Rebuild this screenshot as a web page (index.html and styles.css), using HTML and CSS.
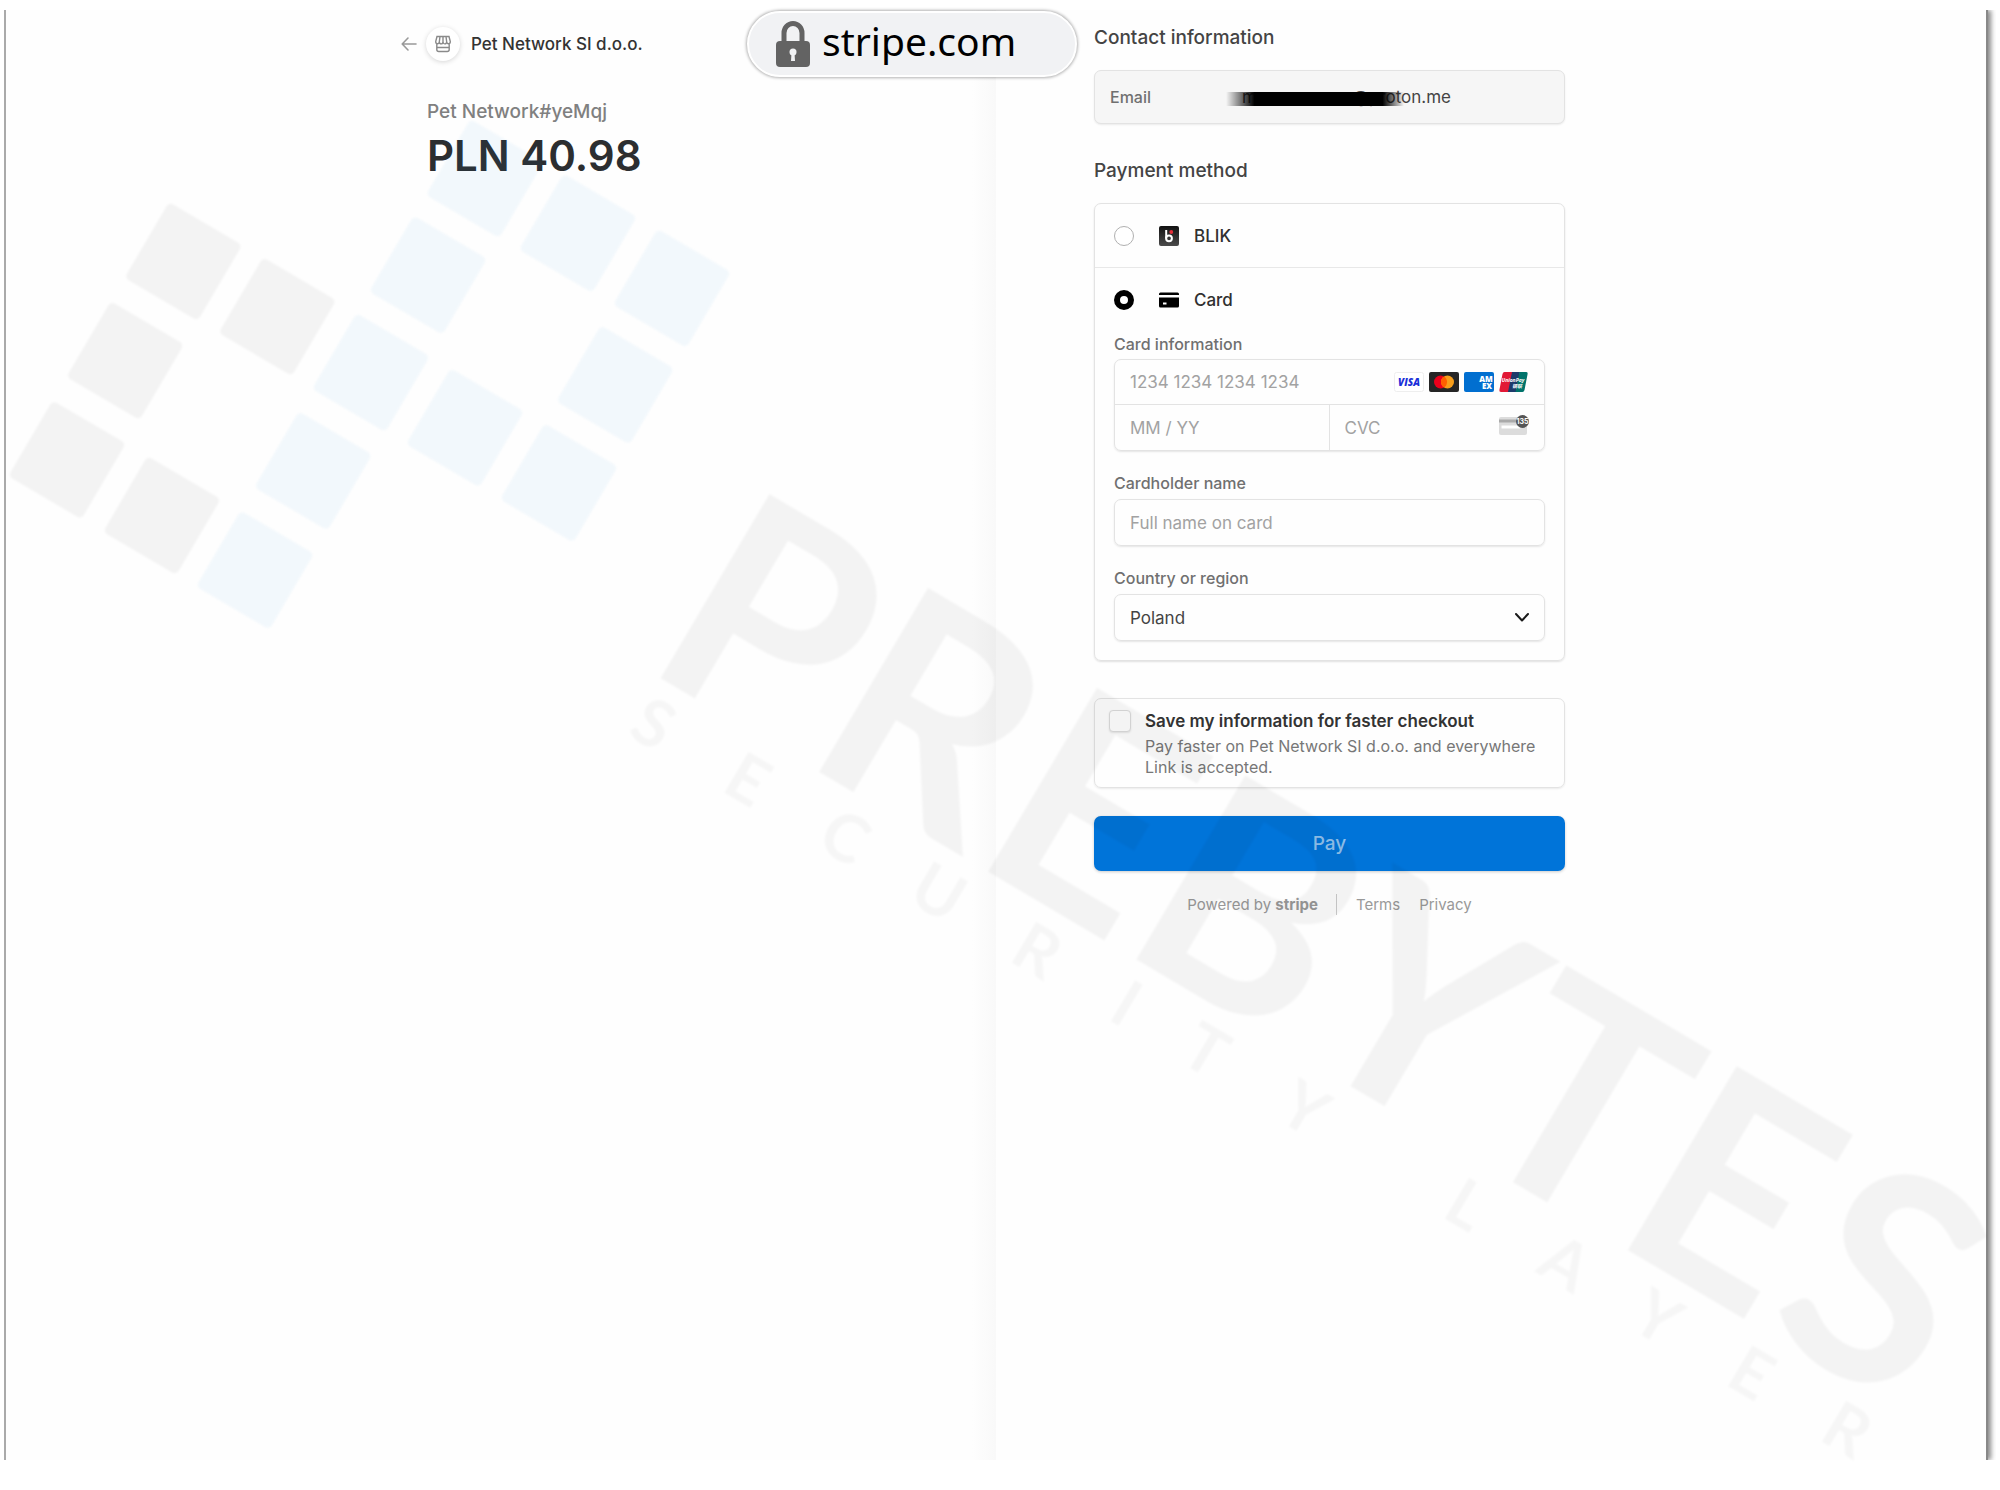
FILE: index.html
```
<!DOCTYPE html>
<html lang="en">
<head>
    <meta charset="UTF-8">
    <title>Pet Network SI d.o.o.</title>
    <link rel="stylesheet" href="styles.css">
</head>
<body>

<div class="window">
    <div class="checkout">
        <header class="summary">
            <div class="business">
                <a href="#" class="back" aria-label="Back">
                    <svg width="16" height="16" viewBox="0 0 16 16" fill="none" stroke="#999" stroke-width="1.6" stroke-linecap="round" stroke-linejoin="round"><path d="M15 8H1.5M7 2L1.2 8L7 14"/></svg>
                </a>
                <span class="store-icon">
                    <svg width="18" height="18" viewBox="0 0 18 18" fill="none" stroke="#8a8a8a" stroke-width="1.4"><path d="M3 1.500h12l1.300 5c0 3-3.600 3-3.600.3c0 2.800-3.700 2.800-3.700 0c0 2.800-3.700 2.800-3.700 0c0 2.700-3.600 2.700-3.600-.3zM6 1.500L5.300 7M12 1.500L12.700 7M9 1.500V7M2.800 9v5.500q0 2 2 2h8.400q2 0 2-2V9M3 12.500h12"/></svg>
                </span>
                <span class="business-name">Pet Network SI d.o.o.</span>
            </div>
            <p class="product">Pet Network#yeMqj</p>
            <h1 class="amount">PLN 40.98</h1>
        </header>

        <form class="payment">
            <h2>Contact information</h2>
            <div class="email-box">
                <label for="email">Email</label>
                <div class="email-value">
                    <input id="email" type="text" value="m••••••••••@proton.me" readonly>
                    <span class="redaction"></span>
                </div>
            </div>

            <h2>Payment method</h2>
            <div class="methods">
                <div class="method method-blik">
                    <input type="radio" name="method" id="blik">
                    <svg class="method-icon" width="20" height="20" viewBox="0 0 20 20"><defs><linearGradient id="bg" x1="0" y1="0" x2="0" y2="1"><stop offset="0" stop-color="#111"/><stop offset="1" stop-color="#4b4b4b"/></linearGradient></defs><rect width="20" height="20" rx="2" fill="url(#bg)"/><path d="M7.2 4v8.3" stroke="#fff" stroke-width="2" fill="none"/><circle cx="10" cy="12.3" r="2.9" fill="none" stroke="#fff" stroke-width="2"/><circle cx="12.3" cy="6" r="1.9" fill="#e52f3a"/></svg>
                    <label for="blik">BLIK</label>
                </div>
                <div class="method">
                    <input type="radio" name="method" id="card" checked>
                    <svg class="method-icon" width="20" height="20" viewBox="0 0 20 20"><path d="M0 4q0-1.5 1.5-1.5h17Q20 2.500 20 4v1H0zM0 7.500h20v8.500q0 1.500-1.500 1.500h-17Q0 17.500 0 16zM4 12.500v2h3.500v-2z" fill="#000" fill-rule="evenodd"/></svg>
                    <label for="card">Card</label>
                </div>

                <div class="card-form">
                    <label for="number">Card information</label>
                    <div class="card-fields">
                        <div class="field number">
                            <input type="text" id="number" placeholder="1234 1234 1234 1234">
                            <span class="brands">
                                <svg width="30" height="20" viewBox="0 0 30 20"><rect x=".5" y=".5" width="29" height="19" rx="2" fill="#fff" stroke="#eee"/><text x="15" y="14" text-anchor="middle" class="visa">VISA</text></svg>
                                <svg width="30" height="20" viewBox="0 0 30 20"><rect width="30" height="20" rx="2" fill="#252525"/><circle cx="11.500" cy="10" r="6.500" fill="#eb001b"/><circle cx="18.500" cy="10" r="6.500" fill="#f79e1b"/><path d="M15 4.500a6.500 6.500 0 0 1 0 11a6.500 6.500 0 0 1 0-11z" fill="#ff5f00"/></svg>
                                <svg width="30" height="20" viewBox="0 0 30 20"><rect width="30" height="20" rx="2" fill="#016fd0"/><text x="22" y="10" text-anchor="middle" class="amex">AM</text><text x="23" y="17" text-anchor="middle" class="amex">EX</text></svg>
                                <svg width="30" height="20" viewBox="0 0 30 20"><path d="M5.500 0H14L10 20H2Q0 20 .4 18L3.500 2Q4 0 5.500 0z" fill="#e21836"/><path d="M13 0h8l-4 20H9z" fill="#1d3a6b"/><path d="M20.500 0H27q2 0 1.600 2L25.500 18q-.5 2-2 2h-7z" fill="#00736b"/><text x="14" y="10" text-anchor="middle" class="union">UnionPay</text><text x="18" y="16" text-anchor="middle" class="union">银联</text></svg>
                            </span>
                        </div>
                        <div class="field expiry">
                            <input type="text" aria-label="Expiration" placeholder="MM / YY">
                        </div>
                        <div class="field cvc">
                            <input type="text" aria-label="CVC" placeholder="CVC">
                            <svg class="cvc-icon" width="30" height="20" viewBox="0 0 30 20"><rect y="2" width="28" height="18" rx="2" fill="#dcdcdc"/><path d="M0 4.500h20v3H0z" fill="#aaa"/><path d="M2.500 10.500h19v3h-19z" fill="#fff"/><circle cx="23.500" cy="6.500" r="6.500" fill="#555"/><text x="23.500" y="9" text-anchor="middle" class="cvc-digits">135</text></svg>
                        </div>
                    </div>

                    <label for="holder">Cardholder name</label>
                    <div class="field boxed"><input type="text" id="holder" placeholder="Full name on card"></div>

                    <label for="country">Country or region</label>
                    <div class="field boxed country">
                        <select id="country"><option>Poland</option></select>
                        <svg width="14" height="9" viewBox="0 0 14 9" fill="none" stroke="#1a1a1a" stroke-width="2" stroke-linecap="round" stroke-linejoin="round"><path d="M1 1L7 7.500L13 1"/></svg>
                    </div>
                </div>
            </div>

            <div class="save">
                <input type="checkbox" id="save">
                <div>
                    <label for="save">Save my information for faster checkout</label>
                    <p>Pay faster on Pet Network SI d.o.o. and everywhere Link is accepted.</p>
                </div>
            </div>

            <button type="submit" class="pay">Pay</button>

            <footer>
                <a href="#" class="powered">Powered by <strong>stripe</strong></a>
                <a href="#">Terms</a>
                <a href="#">Privacy</a>
            </footer>
        </form>
    </div>
</div>

<!-- address pill -->
<div class="address">
    <svg width="34" height="46" viewBox="0 0 34 46"><path d="M8 21V12a9 9.500 0 0 1 18 0v9" fill="none" stroke="#636363" stroke-width="5"/><rect y="20" width="34" height="26" rx="4" fill="#636363"/><circle cx="17" cy="31" r="3.500" fill="#f1f2f4"/><path d="M15.500 32h3l.5 8h-4z" fill="#f1f2f4"/></svg>
    <span>stripe.com</span>
</div>

<!-- watermark -->
<svg class="watermark" viewBox="0 0 2000 1490" aria-hidden="true">
    <g transform="translate(169 202) rotate(30.4)">
        <g fill="#000" fill-opacity=".045">
            <rect x="0" y="0" width="85" height="88" rx="5"/>
            <rect x="109" y="0" width="85" height="88" rx="5"/>
            <rect x="0" y="115" width="85" height="88" rx="5"/>
            <rect x="0" y="230" width="85" height="88" rx="5"/>
            <rect x="110" y="230" width="85" height="88" rx="5"/>
        </g>
        <g fill="#0a82d8" fill-opacity=".05">
            <rect x="218" y="-224" width="85" height="88" rx="5"/>
            <rect x="326" y="-224" width="85" height="88" rx="5"/>
            <rect x="435" y="-224" width="85" height="88" rx="5"/>
            <rect x="218" y="-112" width="85" height="88" rx="5"/>
            <rect x="435" y="-112" width="85" height="88" rx="5"/>
            <rect x="218" y="1" width="85" height="88" rx="5"/>
            <rect x="327" y="1" width="85" height="88" rx="5"/>
            <rect x="436" y="1" width="85" height="88" rx="5"/>
            <rect x="218" y="115" width="85" height="88" rx="5"/>
            <rect x="218" y="230" width="85" height="88" rx="5"/>
        </g>
    </g>
    <text class="mark-name" transform="translate(640 666) rotate(30.6)" dx="0 1 6 2 9 4 1 8">PREBYTES</text>
    <text class="mark-sub" transform="translate(725 793) rotate(30.6)" x="-115 -6 104 210 328 443 525 638 735 831 940 1048 1160 1269">SECURITY LAYER</text>
</svg>

</body>
</html>
```
FILE: styles.css
```
* {
    box-sizing: border-box;
}
body {
    margin: 0;
    padding: 10px 12px 30px 4px;
    min-height: 100vh;
    display: flex;
    position: relative;
    font-family: Inter, sans-serif;
    color: #333;
    background: #fff;
    overflow-x: hidden;
}
h1, h2, p {
    margin: 0;
}
a {
    color: inherit;
    text-decoration: none;
}
input, select, button {
    font-family: inherit;
}
.window {
    flex: 1;
    border-left: 2px solid #aaa;
    border-right: 2px solid #888;
    box-shadow: 3px 0 5px #888;
    clip-path: inset(0 -8px 0 0);
    background: linear-gradient(to right, #fefefe calc(50% - 24px), #f9f9f9 50%, #fefefe 50%);
}
.checkout {
    display: flex;
    justify-content: center;
    gap: 196px;
    padding-top: 12px;
}
.summary, .payment {
    width: 471px;
}

/* left side */
.business {
    display: flex;
    align-items: center;
    height: 44px;
    margin-left: -26px;
}
.back {
    display: flex;
    margin-right: 9px;
}
.store-icon {
    display: flex;
    align-items: center;
    justify-content: center;
    width: 34px;
    height: 34px;
    margin-right: 11px;
    border-radius: 50%;
    background: #fff;
    box-shadow: 0 1px 5px rgba(0, 0, 0, .16);
}
.business-name {
    font-size: 17px;
    font-weight: 500;
}
.product {
    margin-top: 34px;
    font-size: 19px;
    line-height: 24px;
    font-weight: 500;
    color: #808080;
}
.amount {
    margin-top: 6px;
    font-size: 42px;
    line-height: 52px;
    font-weight: 600;
    color: #2c2e30;
}

/* right side */
h2 {
    font-size: 19px;
    line-height: 32px;
    font-weight: 500;
    color: #444;
}
.email-box {
    display: flex;
    align-items: center;
    height: 54px;
    margin: 16px 0 31px;
    padding: 0 15px;
    border: 1px solid #e3e3e3;
    border-radius: 7px;
    background: #f6f6f6;
    box-shadow: 0 1px 2px rgba(0, 0, 0, .08);
    font-size: 16px;
}
.email-box label {
    width: 132px;
    font-weight: 500;
    color: #707070;
}
.email-value {
    position: relative;
    flex: 1;
}
.email-value input {
    width: 100%;
    padding: 0;
    border: 0;
    background: none;
    font-size: 17px;
    color: #444;
}
.redaction {
    position: absolute;
    left: -16px;
    top: 5px;
    width: 178px;
    height: 14px;
    background: linear-gradient(to right, transparent, #000 16%, #000 88%, transparent);
}
.methods {
    margin-top: 16px;
    border: 1px solid #e3e3e3;
    border-radius: 7px;
    box-shadow: 0 1px 2px rgba(0, 0, 0, .12);
}
.method {
    display: flex;
    align-items: center;
    height: 63px;
    padding-left: 19px;
    font-size: 17px;
    font-weight: 500;
    color: #303030;
}
.method input {
    appearance: none;
    width: 20px;
    height: 20px;
    margin: 0;
    border: 1px solid #b0b0b0;
    border-radius: 50%;
    background: #fff;
}
.method input:checked {
    border: 6px solid #000;
}
.method-icon {
    margin: 0 15px 0 25px;
}
.method-blik {
    height: 64px;
    border-bottom: 1px solid #e8e8e8;
}
.card-form {
    padding: 1px 19px 19px;
}
.card-form label {
    display: block;
    font-size: 16px;
    line-height: 24px;
    font-weight: 500;
    color: #707070;
}
.card-fields {
    display: grid;
    grid-template-columns: minmax(0, 1fr) minmax(0, 1fr);
    margin: 3px 0 20px;
    border: 1px solid #e3e3e3;
    border-radius: 7px;
    box-shadow: 0 1px 2px rgba(0, 0, 0, .1);
}
.field {
    display: flex;
    align-items: center;
    height: 45px;
    padding: 0 15px;
}
.field input, .field select {
    appearance: none;
    flex: 1;
    min-width: 0;
    padding: 0;
    border: 0;
    outline: 0;
    background: none;
    font-size: 17px;
    color: #444;
}
.field input::placeholder {
    color: #a2a2a2;
}
.number {
    grid-column: span 2;
    border-bottom: 1px solid #e3e3e3;
}
.expiry {
    border-right: 1px solid #e3e3e3;
}
.brands {
    display: flex;
    gap: 5px;
}
.cvc-icon {
    margin-bottom: 6px;
}
.boxed {
    height: 47px;
    margin: 4px 0 20px;
    border: 1px solid #e3e3e3;
    border-radius: 7px;
    box-shadow: 0 1px 2px rgba(0, 0, 0, .1);
}
.country {
    margin-bottom: 0;
}
.visa {
    font: italic 800 10px "Open Sans", sans-serif;
    fill: #1a2fd8;
}
.amex {
    font: 800 8px "Open Sans", sans-serif;
    fill: #fff;
}
.union {
    font: italic 700 5px "Open Sans", "Noto Sans CJK SC", sans-serif;
    fill: #fff;
}
.cvc-digits {
    font: 700 7px Inter, sans-serif;
    fill: #fff;
}
.save {
    display: flex;
    gap: 14px;
    margin-top: 37px;
    padding: 9px 14px;
    border: 1px solid #e3e3e3;
    border-radius: 7px;
    box-shadow: 0 1px 2px rgba(0, 0, 0, .08);
}
.save input {
    appearance: none;
    flex: none;
    width: 22px;
    height: 22px;
    margin: 2px 0 0;
    border: 1px solid #dcdcdc;
    border-radius: 4px;
    background: #fff;
    box-shadow: 0 1px 2px rgba(0, 0, 0, .1);
}
.save label {
    display: block;
    font-size: 17px;
    line-height: 26px;
    font-weight: 600;
}
.save p {
    margin-top: 2px;
    font-size: 16px;
    line-height: 21px;
    color: #777;
}
.pay {
    display: block;
    width: 100%;
    height: 55px;
    margin-top: 28px;
    border: 0;
    border-radius: 7px;
    background: #0074d9;
    box-shadow: 0 1px 3px rgba(0, 0, 0, .2);
    font-size: 19px;
    font-weight: 500;
    color: #90c2ee;
}
footer {
    display: flex;
    justify-content: center;
    align-items: center;
    gap: 19px;
    margin-top: 23px;
    font-size: 15px;
    line-height: 21px;
    color: #999;
}
.powered {
    padding-right: 18px;
    border-right: 1px solid #ccc;
}

.address {
    position: absolute;
    top: 11px;
    left: calc(50% - 253px);
    display: flex;
    align-items: center;
    gap: 12px;
    width: 330px;
    height: 66px;
    padding-left: 27px;
    border: 2px solid #fff;
    border-radius: 33px;
    background: #f1f2f4;
    box-shadow: 0 0 3px 1px rgba(0, 0, 0, .3);
    font: 39px/50px "Noto Sans", sans-serif;
    color: #000;
}
.address span {
    padding-bottom: 6px;
}
.watermark {
    position: absolute;
    top: 0;
    left: 0;
    width: 100%;
    pointer-events: none;
    filter: blur(1px);
}
.mark-name {
    font: 700 296px Lato, sans-serif;
    fill: rgba(0, 0, 0, .045);
}
.mark-sub {
    font: 700 66px Lato, sans-serif;
    fill: rgba(0, 0, 0, .03);
}
```
